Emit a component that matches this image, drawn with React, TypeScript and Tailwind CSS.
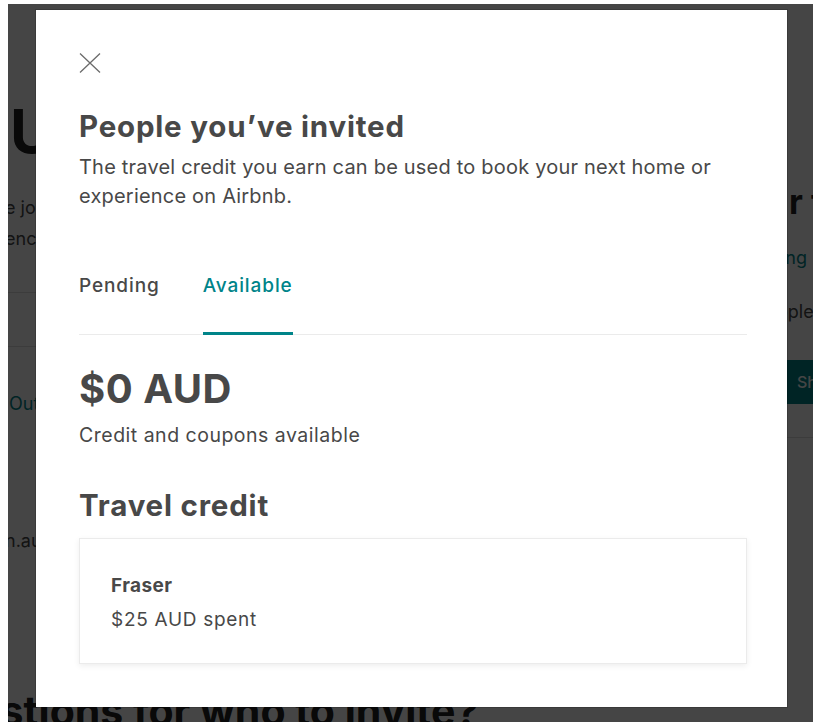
import React from "react";

const font = { fontFamily: "Inter, 'Noto Sans', 'Liberation Sans', sans-serif" };

function CloseIcon() {
  return (
    <svg width="22" height="20" viewBox="0 0 22 20" fill="none" className="block">
      <path d="M1 0.5 L21 19.5 M21 0.5 L1 19.5" stroke="#6b6b6b" strokeWidth="1.3" />
    </svg>
  );
}

function BackgroundPage() {
  return (
    <div className="grid grid-cols-[779px_400px] h-full text-[#484848]">
      <div className="flex flex-col">
        <div className="mt-[91px] ml-[2px] text-[60px] leading-[72px] font-bold text-[#222]">U</div>
        <div className="mt-[29px] -ml-[3px] text-[18px] leading-[24px] whitespace-nowrap">e join</div>
        <div className="mt-[7px] -ml-[3px] text-[18px] leading-[24px] whitespace-nowrap">ence</div>
        <div className="mt-[41px] border-t border-[#dcdcdc] w-[300px]" />
        <div className="mt-[53px] border-t border-[#dcdcdc] w-[300px]" />
        <div className="mt-[45px] ml-[1px] text-[18px] leading-[24px] text-[#008489] whitespace-nowrap">Outlook</div>
        <div className="mt-[113px] -ml-[3px] text-[18px] leading-[24px] whitespace-nowrap">n.au</div>
        <div className="mt-[133px] -ml-[136px] text-[41px] leading-[50px] font-bold text-[#222] whitespace-nowrap">
          Suggestions for who to invite?
        </div>
      </div>
      <div className="flex flex-col">
        <div className="mt-[178px] ml-[2px] text-[34px] leading-[40px] font-bold text-[#222] whitespace-nowrap">r travel</div>
        <div className="mt-[24px] -ml-[6px] text-[18px] leading-[24px] text-[#008489] whitespace-nowrap">ing</div>
        <div className="mt-[30px] -ml-[10px] text-[18px] leading-[24px] whitespace-nowrap">ople</div>
        <div className="mt-[36px] -ml-[20px] w-[200px] h-[44px] bg-[#008489] text-white text-[16px] leading-[44px] font-medium pl-[30px] rounded-[4px]">
          Share
        </div>
        <div className="mt-[33px] -ml-[20px] border-t border-[#dcdcdc] w-[300px]" />
      </div>
    </div>
  );
}

export default function App() {
  return (
    <div className="w-[819px] h-[722px] bg-white pt-[4px] pl-[8px] pr-[6px] overflow-hidden" style={font}>
      <div className="relative h-full overflow-hidden bg-white">
        <BackgroundPage />
        <div className="absolute inset-0 bg-black/[0.73]" />
        <div className="absolute left-[28px] top-[6px] w-[751px] h-[697px] bg-white shadow-[0_0_0_1px_rgba(0,0,0,0.15)] pt-[43px] pl-[43px] pr-[40px] text-[#484848]">
          <CloseIcon />
          <h1 className="mt-[35px] text-[29.5px] leading-[36px] font-bold tracking-[0.8px]">People you’ve invited</h1>
          <p className="mt-[9px] text-[20px] leading-[29px] font-normal tracking-[0.2px] max-w-[660px]">
            The travel credit you earn can be used to book your next home or experience on Airbnb.
          </p>
          <div className="mt-[63px] flex gap-[43px] border-b border-[#ebebeb]">
            <div className="pb-[34px] text-[19px] leading-[24px] font-medium tracking-[0.9px] border-b-[3px] border-transparent -mb-px">Pending</div>
            <div className="pb-[34px] text-[19px] leading-[24px] font-medium tracking-[0.9px] text-[#008489] border-b-[3px] border-[#008489] -mb-px">Available</div>
          </div>
          <div className="mt-[30px] text-[40px] leading-[48px] font-bold tracking-[0.5px]">$0 AUD</div>
          <div className="mt-[10px] text-[19.5px] leading-[24px] tracking-[0.5px]">Credit and coupons available</div>
          <h2 className="mt-[40px] text-[29.5px] leading-[36px] font-bold tracking-[0.8px]">Travel credit</h2>
          <div className="mt-[15px] border border-[#ebebeb] shadow-[0_2px_6px_rgba(0,0,0,0.07)] pt-[35px] pb-[31px] px-[31px]">
            <div className="text-[19px] leading-[24px] font-bold tracking-[0.4px]">Fraser</div>
            <div className="mt-[10px] text-[19px] leading-[24px] tracking-[0.7px]">$25 AUD spent</div>
          </div>
        </div>
      </div>
    </div>
  );
}
